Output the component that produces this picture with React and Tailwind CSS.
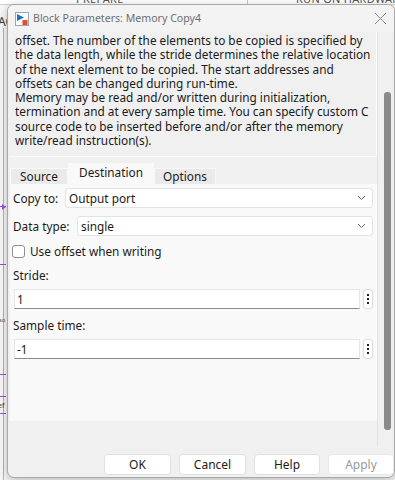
import React from "react";

const descLines = [
  "offset. The number of the elements to be copied is specified by",
  "the data length, while the stride determines the relative location",
  "of the next element to be copied. The start addresses and",
  "offsets can be changed during run-time.",
  "Memory may be read and/or written during initialization,",
  "termination and at every sample time. You can specify custom C",
  "source code to be inserted before and/or after the memory",
  "write/read instruction(s).",
];

function BlockIcon() {
  return (
    <svg width="14" height="14" viewBox="0 0 14 14">
      <rect x="0.5" y="0.5" width="13" height="13" fill="#ffffff" stroke="#9aa6b4" />
      <path d="M2 2 L9 5.5 L2 9 Z" fill="#1f6fc9" />
      <rect x="7.5" y="8" width="5" height="5" fill="#e0502a" />
    </svg>
  );
}

function Chevron() {
  return (
    <svg width="9" height="6" viewBox="0 0 9 6">
      <path d="M1 1 L4.5 4.5 L8 1" fill="none" stroke="#6b6b6b" strokeWidth="1" />
    </svg>
  );
}

function Dropdown({ value, className }) {
  return (
    <div className={"flex h-[20px] items-center justify-between rounded-[3px] border border-[#e3e3e3] bg-white pl-[3px] pr-[6px] " + className}>
      <span>{value}</span>
      <Chevron />
    </div>
  );
}

function Field({ value }) {
  return (
    <div className="flex h-[20px] items-center gap-[3px] pl-[4px]">
      <div className="flex h-[20px] flex-1 items-center border border-[#e6e6e6] border-b-[#8c8c8c] bg-white pl-[2px]">
        {value}
      </div>
      <div className="flex h-[20px] w-[10px] flex-col items-center justify-center gap-[2px] rounded-[3px] border border-[#dcdcdc] bg-white">
        <span className="h-[2px] w-[2px] bg-[#222]" />
        <span className="h-[2px] w-[2px] bg-[#222]" />
        <span className="h-[2px] w-[2px] bg-[#222]" />
      </div>
    </div>
  );
}

export default function App() {
  return (
    <div
      className="relative h-[480px] w-[395px] overflow-hidden bg-[#f6f6f6] text-[11.8px] text-[#1b1b1b]"
      style={{ fontFamily: '"Noto Sans", "Open Sans", sans-serif' }}
    >
      {/* app behind the dialog */}
      <div className="absolute left-0 top-0 h-[5px] w-full overflow-hidden border-b border-[#d0d0d0] bg-white">
        <span className="absolute left-[76px] top-[-9px] whitespace-nowrap text-[11px] tracking-wide text-[#555]">PREPARE</span>
        <span className="absolute left-[247px] top-0 h-[5px] w-px bg-[#c8c8c8]" />
        <span className="absolute left-[296px] top-[-9px] whitespace-nowrap text-[11px] tracking-wide text-[#555]">RUN ON HARDWARE</span>
      </div>
      <span className="absolute left-[-2px] top-[13px] text-[12px] text-[#333]">AC</span>
      <span className="absolute left-[3px] top-[28px] h-[452px] w-px bg-[#b5b5b5]" />
      <span className="absolute left-0 top-[206px] h-px w-[6px] bg-[#a24ce8]" />
      <span className="absolute left-[2px] top-[204px] h-0 w-0 border-y-[3px] border-l-[4px] border-y-transparent border-l-[#a24ce8]" />
      <span className="absolute left-0 top-[264px] h-px w-[6px] bg-[#a24ce8]" />
      <span className="absolute left-[-1px] top-[316px] text-[6px] text-[#555]">so</span>
      <span className="absolute left-0 top-[374px] h-px w-[6px] bg-[#a24ce8]" />
      <span className="absolute left-0 top-[396px] h-px w-[6px] bg-[#a24ce8]" />
      <span className="absolute left-[-2px] top-[401px] text-[7px] text-[#333]">ef</span>
      <span className="absolute left-0 top-[413px] h-px w-[6px] bg-[#a24ce8]" />

      {/* dialog */}
      <div className="absolute left-[7px] top-[4px] flex h-[474px] w-[388px] flex-col overflow-hidden rounded-[7px] border border-[#a8a8a8] bg-[#f0f0f0] shadow-[0_2px_8px_rgba(0,0,0,0.25)]">
        {/* title bar */}
        <div className="flex h-[27px] shrink-0 items-center bg-[#f3f3f3] pl-[7px] pr-[4px]">
          <BlockIcon />
          <span className="ml-[4px] flex-1 text-[10.6px] text-[#6f6f6f]">Block Parameters: Memory Copy4</span>
          <svg width="13" height="13" viewBox="0 0 13 13" className="mr-[3px]">
            <path d="M1 1 L12 12 M12 1 L1 12" stroke="#8a8a8a" strokeWidth="1" />
          </svg>
        </div>

        {/* scroll area */}
        <div className="flex h-[414px] shrink-0">
          <div className="flex w-[369px] flex-col pl-[2px]">
            <div className="h-[125px] border-b border-r border-[#fafafa] bg-[#f0f0f0] pl-[5px] pt-[1px] leading-[14.3px]">
              {descLines.map((l) => (
                <div key={l} className="whitespace-nowrap">{l}</div>
              ))}
            </div>

            {/* tabs */}
            <div className="mt-[6px] flex h-[21px] items-end">
              <div className="flex h-[16px] w-[58px] items-center justify-center border border-b-0 border-[#f8f8f8] bg-[#eaeaea]">Source</div>
              <div className="flex h-[21px] w-[86px] items-center justify-center bg-[#f9f9f9] pb-[2px]">Destination</div>
              <div className="flex h-[16px] w-[62px] items-center justify-center border border-b-0 border-[#f8f8f8] bg-[#eaeaea]">Options</div>
            </div>

            {/* panel */}
            <div className="flex h-[237px] flex-col bg-[#f9f9f9] pr-[4px] pt-[4px] leading-[16px]">
              <div className="flex items-center">
                <span className="w-[55px] pl-[3px]">Copy to:</span>
                <Dropdown value="Output port" className="flex-1" />
              </div>
              <div className="mt-[8px] flex items-center">
                <span className="w-[67px] pl-[3px]">Data type:</span>
                <Dropdown value="single" className="flex-1" />
              </div>
              <div className="mt-[7px] flex h-[16px] items-center pl-[2px]">
                <span className="h-[13px] w-[13px] rounded-[3px] border border-[#8f8f8f] bg-white" />
                <span className="ml-[5px]">Use offset when writing</span>
              </div>
              <div className="mt-[8px] h-[16px] pl-[3px]">Stride:</div>
              <div className="mt-[6px]">
                <Field value="1" />
              </div>
              <div className="mt-[8px] h-[16px] pl-[3px]">Sample time:</div>
              <div className="mt-[6px]">
                <Field value="-1" />
              </div>
            </div>
          </div>

          {/* scrollbar */}
          <div className="relative flex-1 border-l border-[#e4e4e4]">
            <div className="absolute left-[6px] top-[60px] h-[338px] w-[7px] rounded-[3px] bg-[#8a8a8a]" />
          </div>
        </div>

        {/* buttons */}
        <div className="flex flex-1 items-start justify-end gap-[8px] pt-[8px] text-[12px]">
          <button className="h-[21px] w-[67px] rounded-[4px] border border-[#e0e0e0] bg-white text-[#1b1b1b]">OK</button>
          <button className="h-[21px] w-[67px] rounded-[4px] border border-[#e0e0e0] bg-white text-[#1b1b1b]">Cancel</button>
          <button className="h-[21px] w-[66px] rounded-[4px] border border-[#e0e0e0] bg-white text-[#1b1b1b]">Help</button>
          <button className="h-[21px] w-[66px] rounded-[4px] border border-[#e8e8e8] bg-white text-[#9a9a9a]">Apply</button>
        </div>
      </div>
    </div>
  );
}
